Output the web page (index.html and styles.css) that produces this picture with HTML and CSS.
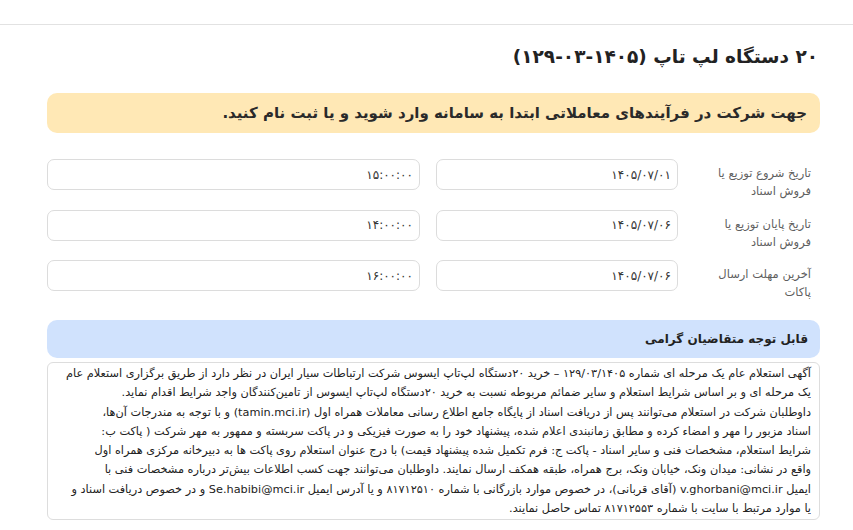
FILE: index.html
```html
<!DOCTYPE html>
<html lang="fa" dir="rtl">
<head>
<meta charset="utf-8">
<title>۲۰ دستگاه لپ تاپ</title>
<link rel="stylesheet" href="styles.css">
</head>
<body>
<div class="topbar"></div>
<main class="page">
  <h1 class="title">۲۰ دستگاه لپ تاپ (۱۴۰۵-۰۳-۱۲۹)</h1>
  <div class="alert">جهت شرکت در فرآیندهای معاملاتی ابتدا به سامانه وارد شوید و یا ثبت نام کنید.</div>
  <div class="form">
    <div class="label">تاریخ شروع توزیع یا فروش اسناد</div>
    <div class="field date">۱۴۰۵/۰۷/۰۱</div>
    <div class="field time">۱۵:۰۰:۰۰</div>
    <div class="label">تاریخ پایان توزیع یا فروش اسناد</div>
    <div class="field date">۱۴۰۵/۰۷/۰۶</div>
    <div class="field time">۱۴:۰۰:۰۰</div>
    <div class="label">آخرین مهلت ارسال پاکات</div>
    <div class="field date">۱۴۰۵/۰۷/۰۶</div>
    <div class="field time">۱۶:۰۰:۰۰</div>
  </div>
  <div class="notice-head">قابل توجه متقاضیان گرامی</div>
  <div class="notice-body">آگهی استعلام عام یک مرحله ای شماره ۱۲۹/۰۳/۱۴۰۵ – خرید ۲۰دستگاه لپ‌تاپ ایسوس شرکت ارتباطات سیار ایران در نظر دارد از طریق برگزاری استعلام عام<br>یک مرحله ای و بر اساس شرایط استعلام و سایر ضمائم مربوطه نسبت به خرید ۲۰دستگاه لپ‌تاپ ایسوس از تامین‌کنندگان واجد شرایط اقدام نماید.<br>داوطلبان شرکت در استعلام می‌توانند پس از دریافت اسناد از پایگاه جامع اطلاع رسانی معاملات همراه اول (tamin.mci.ir) و با توجه به مندرجات آن‌ها،<br>اسناد مزبور را مهر و امضاء کرده و مطابق زمانبندی اعلام شده، پیشنهاد خود را به صورت فیزیکی و در پاکت سربسته و ممهور به مهر شرکت ( پاکت ب:<br>شرایط استعلام، مشخصات فنی و سایر اسناد - پاکت ج: فرم تکمیل شده پیشنهاد قیمت) با درج عنوان استعلام روی پاکت ها به دبیرخانه مرکزی همراه اول<br>واقع در نشانی: میدان ونک، خیابان ونک، برج همراه، طبقه همکف ارسال نمایند. داوطلبان می‌توانند جهت کسب اطلاعات بیش‌تر درباره مشخصات فنی با<br>ایمیل v.ghorbani@mci.ir (آقای قربانی)، در خصوص موارد بازرگانی با شماره ۸۱۷۱۲۵۱۰ و یا آدرس ایمیل Se.habibi@mci.ir و در خصوص دریافت اسناد و<br>یا موارد مرتبط با سایت با شماره ۸۱۷۱۲۵۵۳ تماس حاصل نمایند.</div>
</main>
</body>
</html>
```
FILE: styles.css
```css
html, body {
  margin: 0;
  padding: 0;
  background: #ffffff;
}
body {
  font-family: "DejaVu Sans", sans-serif;
  color: #222;
}
.topbar {
  height: 24px;
  border-bottom: 1px solid #e2e2e2;
}
.page {
  padding-left: 47px;
  padding-right: 33px;
}
.title {
  margin: 17px 2px 0 0;
  font-size: 18.5px;
  line-height: 30px;
  font-weight: bold;
  color: #222;
}
.alert {
  margin-top: 21px;
  height: 40px;
  display: flex;
  align-items: center;
  padding: 0 13px;
  background: #ffe8b5;
  border-radius: 10px;
  font-size: 15px;
  font-weight: bold;
  color: #2a2a2a;
}
.form {
  margin-top: 26px;
  display: grid;
  grid-template-columns: 120px 264px 1fr;
  grid-auto-rows: 31px;
  column-gap: 0;
  row-gap: 19.5px;
}
.label {
  padding: 5px 9px 0 0;
  font-size: 11.5px;
  line-height: 18px;
  color: #5f5f5f;
}
.field {
  border: 1px solid #dcdcdc;
  border-radius: 7px;
  display: flex;
  align-items: center;
  padding: 0 6px;
  font-size: 12px;
  color: #333;
}
.date {
  margin-right: 22px;
}
.time {
  margin-right: 16px;
}
.notice-head {
  margin-top: 29px;
  height: 38px;
  display: flex;
  align-items: center;
  padding: 0 12px;
  background: #d0e2fd;
  border-radius: 10px;
  font-size: 12px;
  font-weight: bold;
  color: #222;
}
.notice-body {
  margin-top: 4px;
  height: 152px;
  border: 1px solid #dddddd;
  border-radius: 6px;
  padding: 1px 8px 3px 3px;
  font-size: 11.3px;
  line-height: 19.3px;
  color: #222;
  white-space: nowrap;
  overflow: hidden;
}
```
